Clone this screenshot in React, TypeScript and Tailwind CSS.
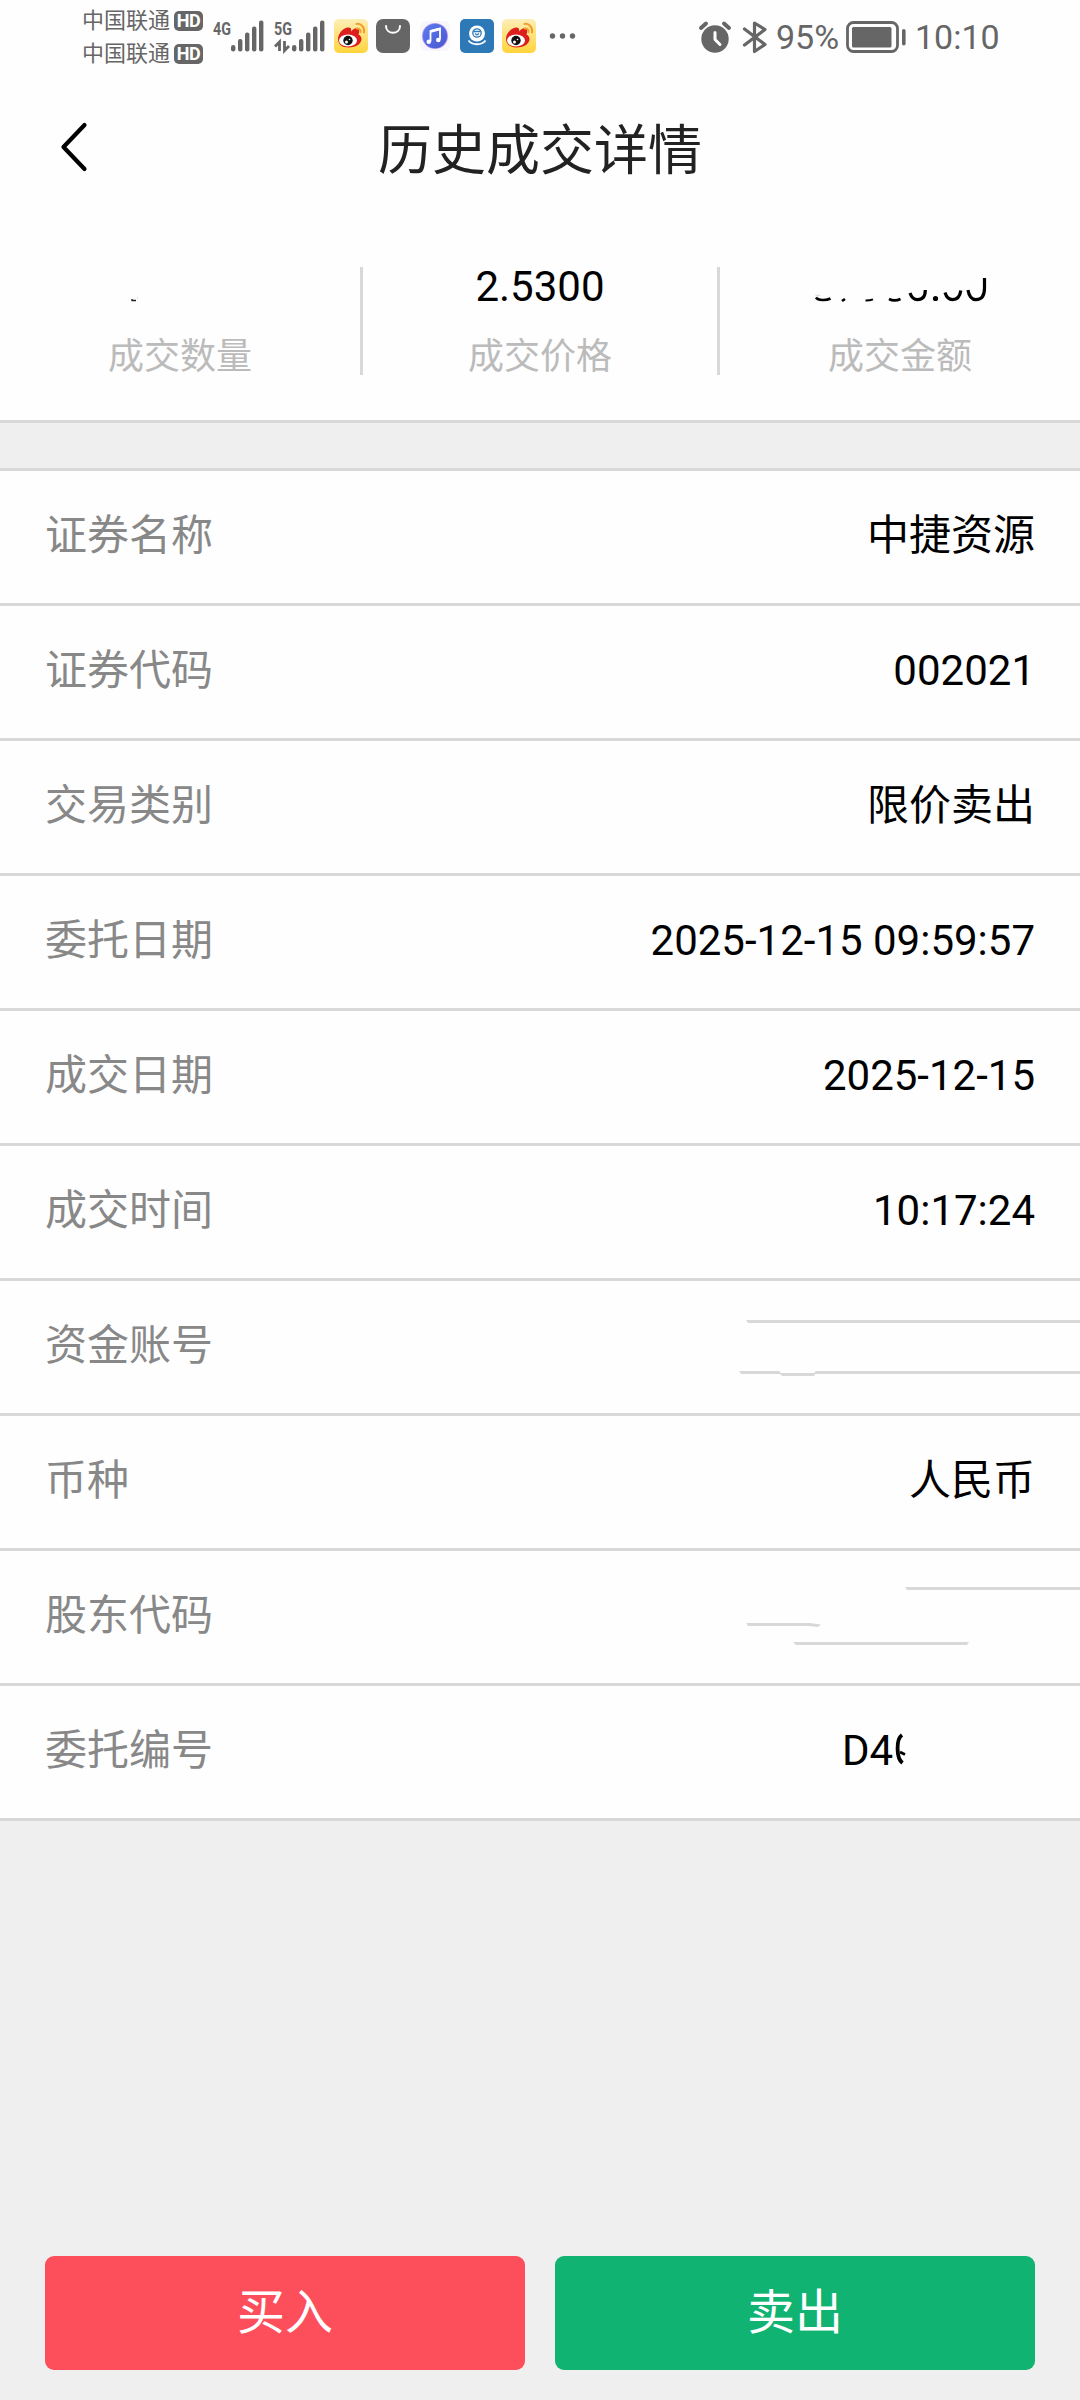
import React from 'react';

interface DetailRow {
  label: string;
  value?: string;
  content?: React.ReactNode;
}

const SignalBars: React.FC = () => (
  <g fill="#666">
    <rect x="18" y="45" width="4.4" height="6.4" rx="2.2" />
    <rect x="25" y="39" width="4.4" height="12.4" rx="2" />
    <rect x="32" y="32.5" width="4.4" height="18.9" rx="2" />
    <rect x="39" y="26.5" width="4.4" height="24.9" rx="2" />
    <rect x="46" y="20.5" width="4.4" height="30.9" rx="2" />
  </g>
);

const Signal: React.FC<{ network: string; data?: boolean }> = ({ network, data }) => (
  <svg width="51" height="72" viewBox="0 0 51 72">
    <text
      x="0"
      y="34.5"
      fontSize="18"
      fontWeight="700"
      fill="#666"
      textLength="18"
      lengthAdjust="spacingAndGlyphs"
      fontFamily="Roboto, sans-serif"
    >
      {network}
    </text>
    {data && (
      <g fill="none" stroke="#666" strokeWidth="2.8">
        <path d="M5.500 51V42L1 46.500" />
        <path d="M10.500 41V50.500L15 46" />
      </g>
    )}
    <SignalBars />
  </svg>
);

const Carrier: React.FC = () => (
  <div className="flex h-[33px] items-center">
    <span className="w-[88px] text-[22px] leading-[33px]">中国联通</span>
    <span className="ml-1 flex h-5 w-[29px] items-center justify-center rounded-[5px] bg-[#666] text-[18px] leading-none font-bold tracking-[-0.5px] text-white">
      HD
    </span>
  </div>
);

const WeiboIcon: React.FC = () => (
  <svg width="34" height="34" viewBox="0 0 34 34">
    <defs>
      <linearGradient id="weibo" x1="0" y1="0" x2="0" y2="1">
        <stop offset="0" stopColor="#fdeeb8" />
        <stop offset="1" stopColor="#ffd43a" />
      </linearGradient>
    </defs>
    <rect width="34" height="34" rx="5" fill="url(#weibo)" />
    <path
      d="M4 20C4 14 10 8.500 14 8.500C17 8.500 17.500 10 17 12.500C20 9 24 8 25 10.500C25.500 12.500 25 14 24.500 15.500C26.500 16.500 27.500 18 27.500 20.500C27 25.500 21 28.500 14.500 28.500C8 28.500 4 25 4 20Z"
      fill="#dc1e1e"
    />
    <ellipse cx="14" cy="21.500" rx="9" ry="6" fill="#fff" />
    <circle cx="14" cy="21.500" r="4.700" fill="#111" />
    <circle cx="12.500" cy="23" r="1.500" fill="#fff" />
    <circle cx="15.500" cy="20.500" r="0.800" fill="#fff" />
    <path
      d="M22.500 5C27 4 31 8.500 30 13.500M22.500 9.500C25 9 27 10.800 26.500 13"
      fill="none"
      stroke="#f0a02c"
      strokeWidth="2"
      strokeLinecap="round"
    />
  </svg>
);

const BagIcon: React.FC = () => (
  <svg width="34" height="34" viewBox="0 0 34 34">
    <rect width="34" height="34" rx="7" fill="#666" />
    <path d="M10 7C10 16 24 16 24 7" fill="none" stroke="#fff" strokeWidth="2" strokeLinecap="round" />
  </svg>
);

const MusicIcon: React.FC = () => (
  <svg width="34" height="34" viewBox="0 0 34 34">
    <defs>
      <linearGradient id="music" x1="0" y1="0" x2="1" y2="1">
        <stop offset="0" stopColor="#5b7df0" />
        <stop offset="1" stopColor="#4b55cf" />
      </linearGradient>
    </defs>
    <rect x="2" y="2" width="30" height="30" rx="6" fill="#f7f6fa" />
    <circle cx="17" cy="17" r="13" fill="#c09af0" />
    <circle cx="17" cy="17" r="12.200" fill="url(#music)" />
    <path d="M12.500 22.500V12L22 9.500V20.500" fill="none" stroke="#fff" strokeWidth="1.800" />
    <path d="M12.500 12.500L22 10" stroke="#fff" strokeWidth="2.600" />
    <circle cx="10.800" cy="22.800" r="2.300" fill="#fff" />
    <circle cx="20.300" cy="21" r="2.300" fill="#fff" />
  </svg>
);

const CameraIcon: React.FC = () => (
  <svg width="34" height="34" viewBox="0 0 34 34">
    <rect width="34" height="34" rx="5" fill="#2d78b7" />
    <circle cx="17" cy="14.500" r="8" fill="#fff" />
    <circle cx="17" cy="14" r="4.200" fill="none" stroke="#2d78b7" strokeWidth="1.300" />
    <path d="M13.500 12.500H20.500M15 14.500L17 16L19 14.500" fill="none" stroke="#2d78b7" strokeWidth="1.300" />
    <path d="M8.500 21.500C12 26.500 22 26.500 25.500 21.500" fill="none" stroke="#fff" strokeWidth="1.800" />
  </svg>
);

const AlarmIcon: React.FC = () => (
  <svg width="34" height="34" viewBox="0 0 34 34">
    <circle cx="17" cy="19" r="13.700" fill="#666" />
    <path d="M3 8L8 3.500M26 3.500L31 8" stroke="#666" strokeWidth="4" strokeLinecap="round" />
    <path d="M17 12.500V19.500L22 24.500" fill="none" stroke="#fff" strokeWidth="3" strokeLinecap="round" strokeLinejoin="round" />
  </svg>
);

const BluetoothIcon: React.FC = () => (
  <svg width="26" height="34" viewBox="0 0 26 34">
    <path
      d="M2.500 9L23 24.500L12.500 31.500V3L23 9.500L2.500 25"
      fill="none"
      stroke="#666"
      strokeWidth="3.200"
      strokeLinecap="round"
      strokeLinejoin="round"
    />
  </svg>
);

const BatteryIcon: React.FC = () => (
  <svg width="60" height="34" viewBox="0 0 60 34">
    <rect x="1.500" y="2.500" width="50" height="29" rx="6" fill="none" stroke="#666" strokeWidth="2.800" />
    <rect x="6" y="7" width="39.500" height="20.500" rx="1.500" fill="#666" />
    <rect x="56" y="9" width="3.600" height="16.500" rx="1.800" fill="#666" />
  </svg>
);

const StatusBar: React.FC = () => (
  <div className="flex h-[72px] items-start pl-[82px] text-[#666]">
    <div className="flex w-[131px] flex-col pt-[4px]">
      <Carrier />
      <Carrier />
    </div>
    <Signal network="4G" />
    <div className="ml-[10px]">
      <Signal network="5G" data />
    </div>
    <div className="mt-[19px] ml-[9px] flex gap-2">
      <WeiboIcon />
      <BagIcon />
      <MusicIcon />
      <CameraIcon />
      <WeiboIcon />
    </div>
    <svg className="mt-[19px] ml-[12px]" width="30" height="34" viewBox="0 0 30 34">
      <g fill="#666">
        <circle cx="4.500" cy="17" r="2.700" />
        <circle cx="14.500" cy="17" r="2.700" />
        <circle cx="24.500" cy="17" r="2.700" />
      </g>
    </svg>
    <div className="mt-[19px] ml-[120px] flex items-center">
      <AlarmIcon />
      <div className="ml-[10px]">
        <BluetoothIcon />
      </div>
      <span className="ml-[8px] w-[70px] pt-px text-[34px] leading-[34px]">95%</span>
      <BatteryIcon />
      <span className="ml-[9px] pt-px text-[34px] leading-[34px]">10:10</span>
    </div>
  </div>
);

const Header: React.FC = () => (
  <div className="grid h-[150px] grid-cols-[120px_1fr_120px] items-center">
    <svg className="ml-[60px]" width="30" height="50" viewBox="0 0 30 50">
      <path d="M24.500 3L3.500 25L24.500 47" fill="none" stroke="#000" strokeWidth="4.200" strokeLinecap="round" strokeLinejoin="round" />
    </svg>
    <h1 className="pt-[9px] text-center text-[54px] leading-[60px] font-normal text-[#222]">历史成交详情</h1>
  </div>
);

// What is left of the hidden quantity
const QuantityRemnant: React.FC = () => (
  <svg className="mx-auto shrink-0" width="180" height="40" viewBox="90 267 180 40">
    <path d="M132 299V300.500H136" fill="none" stroke="#222" strokeWidth="1.400" />
    <path d="M137.500 297V299" stroke="#ddd" strokeWidth="1" />
  </svg>
);

// What is left of the hidden amount
const AmountRemnant: React.FC = () => (
  <svg className="mx-auto shrink-0" width="180" height="40" viewBox="810 267 180 40">
    <path d="M815.500 295.500H820" stroke="#ddd" strokeWidth="1.500" />
    <g fill="none" stroke="#000" strokeWidth="3.200">
      <path d="M816 297.500C818 300.500 826 300.800 830.500 298.500" strokeWidth="2.600" />
      <path d="M842 301L845 299" strokeWidth="2.600" />
      <path d="M865.500 300.500C868 300.500 871 300.200 873 299.400" strokeWidth="2" />
      <path d="M889 299C892 300.600 897 300.600 900.500 299" strokeWidth="2.600" />
      <path d="M910 293C911.500 297.500 914 299.600 917.500 299.600C922.500 299.600 925.300 296.500 925.300 290" />
      <path d="M945 292.500C946.500 297.500 949 299.600 952.500 299.600C957 299.600 960 296.500 960.800 290.500" />
      <path d="M968 290C969 296.500 972 299.600 976 299.600C982 299.600 984.500 295.500 984.500 288V278" />
    </g>
    <circle cx="935.500" cy="298.500" r="2.600" fill="#000" />
  </svg>
);

const Summary: React.FC = () => (
  <div className="grid grid-cols-3 border-b-[3px] border-[#d8d8d8] py-[45px] text-center">
    <div className="flex h-[108px] flex-col gap-[30px]">
      <QuantityRemnant />
      <span className="text-[36px] leading-[40px] text-[#bbb]">成交数量</span>
    </div>
    <div className="flex h-[108px] flex-col gap-[30px] border-x-[3px] border-[#d8d8d8]">
      <span className="text-[42px] leading-[40px]">2.5300</span>
      <span className="text-[36px] leading-[40px] text-[#bbb]">成交价格</span>
    </div>
    <div className="flex h-[108px] flex-col gap-[30px]">
      <AmountRemnant />
      <span className="text-[36px] leading-[40px] text-[#bbb]">成交金额</span>
    </div>
  </div>
);

const AccountLines: React.FC = () => (
  <svg className="mt-[2px] -mr-[45px]" width="380" height="132" viewBox="700 0 380 132">
    <g fill="#d8d8d8">
      <path d="M746 39H1080V42H748Z" />
      <path d="M739 90H779L782 93H741Z" />
      <path d="M779 92H816L814 95H782Z" />
      <path d="M816 90H1080V93H813Z" />
    </g>
  </svg>
);

const HolderLines: React.FC = () => (
  <svg className="mt-[2px] -mr-[45px]" width="380" height="132" viewBox="700 0 380 132">
    <g fill="#d8d8d8">
      <path d="M905 36H1080V39H907Z" />
      <path d="M746 72H810L821 73.500L818 76L809 75H748Z" />
      <path d="M793 91H969L967 94H796Z" />
    </g>
  </svg>
);

const OrderNumber: React.FC = () => (
  <div className="flex w-[193px] items-center">
    <span>D4</span>
    <svg className="ml-[1px]" width="16" height="42" viewBox="0 0 16 42">
      <path d="M8 5C2 9 2 28 8.500 33" fill="none" stroke="#000" strokeWidth="3.800" />
      <path d="M6 22L11 24.500" stroke="#000" strokeWidth="2.800" />
    </svg>
  </div>
);

const rows: DetailRow[] = [
  { label: '证券名称', value: '中捷资源' },
  { label: '证券代码', value: '002021' },
  { label: '交易类别', value: '限价卖出' },
  { label: '委托日期', value: '2025-12-15 09:59:57' },
  { label: '成交日期', value: '2025-12-15' },
  { label: '成交时间', value: '10:17:24' },
  { label: '资金账号', content: <AccountLines /> },
  { label: '币种', value: '人民币' },
  { label: '股东代码', content: <HolderLines /> },
  { label: '委托编号', content: <OrderNumber /> },
];

const App: React.FC = () => {
  return (
    <div className="flex h-[2400px] w-[1080px] flex-col overflow-hidden bg-[#efefef] font-[Roboto,'Noto_Sans_CJK_SC',sans-serif] text-black">
      <div className="bg-[#fefefe]">
        <StatusBar />
        <Header />
        <Summary />
      </div>

      <div className="mt-[45px] border-t-[3px] border-[#d8d8d8] bg-[#fefefe]">
        {rows.map((row) => (
          <div
            key={row.label}
            className="flex h-[135px] items-center justify-between border-b-[3px] border-[#d8d8d8] px-[45px] pb-[2px] text-[42px] leading-[60px]"
          >
            <span className="text-[#888]">{row.label}</span>
            {row.content ?? <span>{row.value}</span>}
          </div>
        ))}
      </div>

      <div className="mt-auto grid grid-cols-2 gap-[30px] px-[45px] pb-[30px]">
        <button className="h-[114px] rounded-[9px] bg-[#fd4e5c] text-[48px] text-white">买入</button>
        <button className="h-[114px] rounded-[9px] bg-[#11b373] text-[48px] text-white">卖出</button>
      </div>
    </div>
  );
};

export default App;
